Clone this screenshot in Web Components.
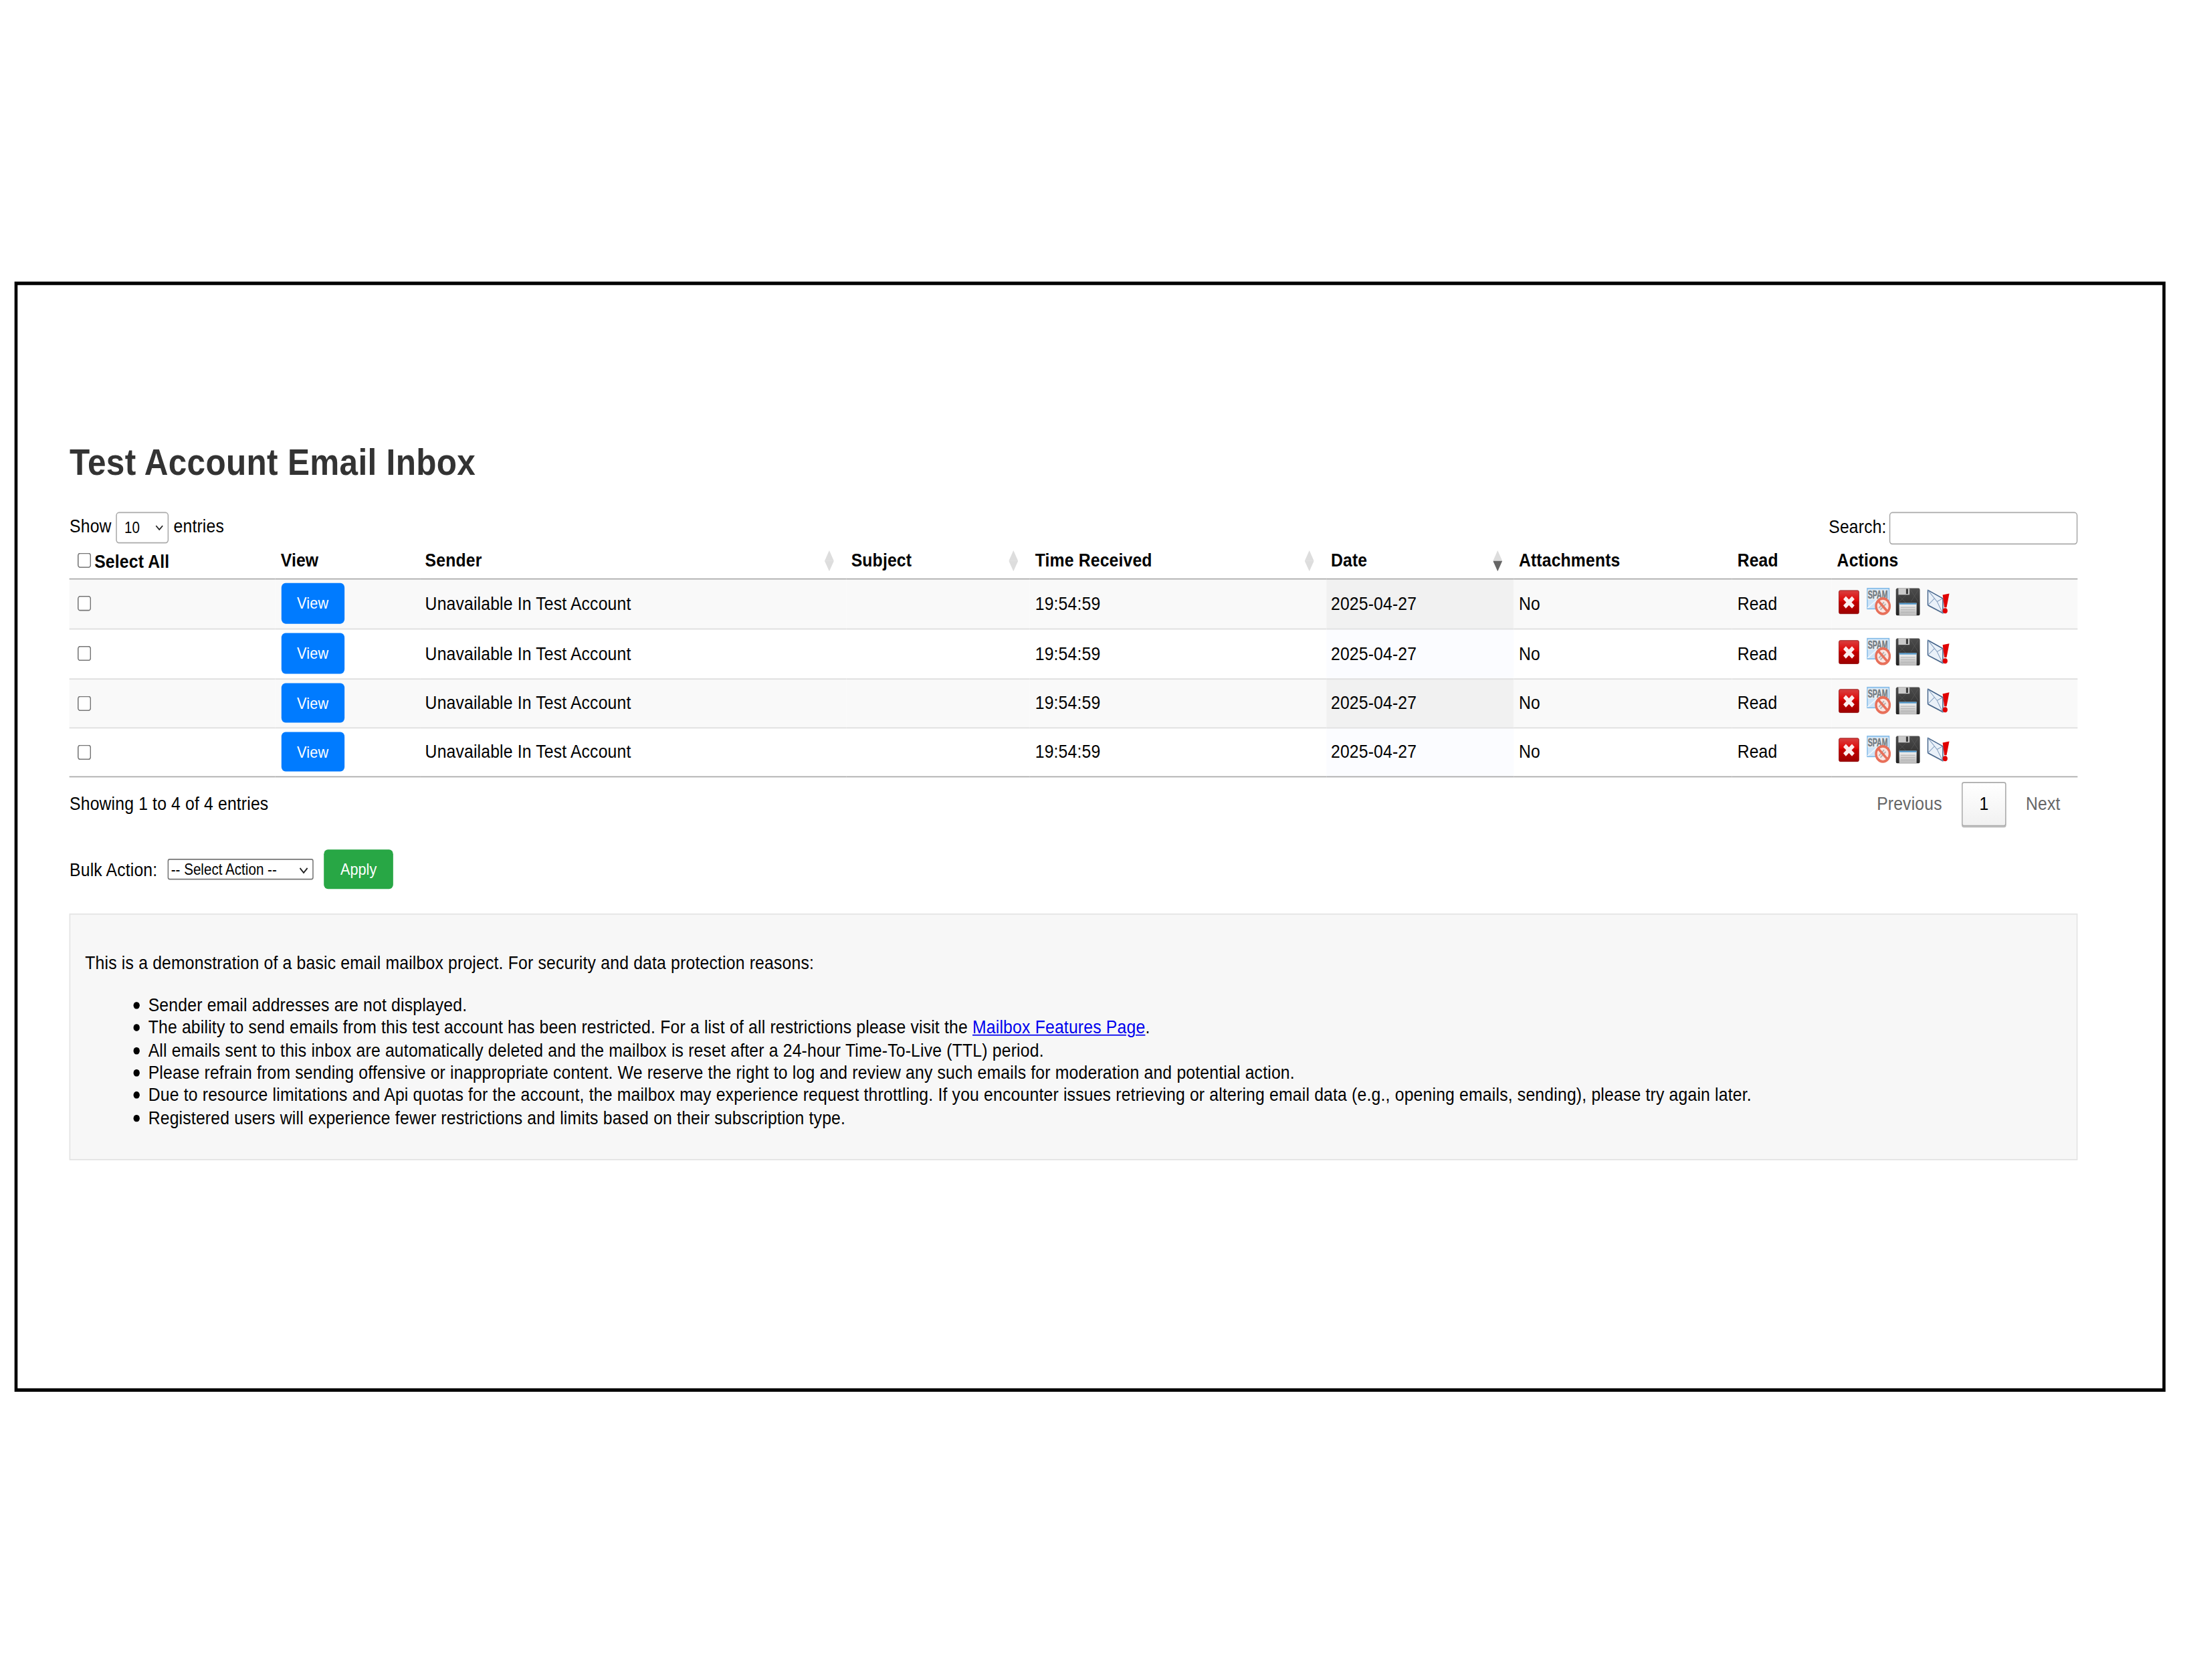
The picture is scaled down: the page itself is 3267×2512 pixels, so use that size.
<!doctype html>
<html>
<head>
<meta charset="utf-8">
<title>Test Account Email Inbox</title>
<style>
  html { overflow: hidden; background: #fff; }
  body { margin: 0; padding: 0; width: 3267px; height: 2512px; }
  a { color: #0000ee; }
  p { margin: 0 0 16px; }
  ul { margin: 0; padding: 0 0 0 61px; list-style: none; }
  li { position: relative; }
  li::before {
    content: '';
    position: absolute;
    left: -13.9px;
    top: 7px;
    width: 5.2px;
    height: 6px;
    border-radius: 50%;
    background: #000;
  }
</style>
</head>
<body>
<page-stage>
  <page-frame>
    <inbox-title>Test Account Email Inbox</inbox-title>
    <inbox-controls></inbox-controls>
    <inbox-table></inbox-table>
    <inbox-footer></inbox-footer>
    <bulk-action></bulk-action>
    <notice-box>
      <p>This is a demonstration of a basic email mailbox project. For security and data protection reasons:</p>
      <ul>
        <li>Sender email addresses are not displayed.</li>
        <li>The ability to send emails from this test account has been restricted. For a list of all restrictions please visit the <a href="#">Mailbox Features Page</a>.</li>
        <li>All emails sent to this inbox are automatically deleted and the mailbox is reset after a 24-hour Time-To-Live (TTL) period.</li>
        <li>Please refrain from sending offensive or inappropriate content. We reserve the right to log and review any such emails for moderation and potential action.</li>
        <li>Due to resource limitations and Api quotas for the account, the mailbox may experience request throttling. If you encounter issues retrieving or altering email data (e.g., opening emails, sending), please try again later.</li>
        <li>Registered users will experience fewer restrictions and limits based on their subscription type.</li>
      </ul>
    </notice-box>
  </page-frame>
</page-stage>

<script>
const chevron = (w, h) => `url("data:image/svg+xml,%3Csvg xmlns='http://www.w3.org/2000/svg' viewBox='0 0 10 6' width='${w}' height='${h}' preserveAspectRatio='none'%3E%3Cpath d='M1 1L5 5L9 1' fill='none' stroke='%23222' stroke-width='1.3'/%3E%3C/svg%3E")`

// the reference is a small page stretched to the window, so the whole stage is scaled
class PageStage extends HTMLElement {
  constructor() {
    super()
    this.attachShadow({ mode: 'open' }).innerHTML = `
      <style>
        :host {
          display: block;
          box-sizing: border-box;
          width: 2111.8px;
          height: 1443.7px;
          padding: 242px 0 0 13.6px;
          transform: scale(1.547, 1.74);
          transform-origin: 0 0;
          font: 16px/19.4px "Liberation Sans", Arial, sans-serif;
          letter-spacing: .1px;
          color: #000;
        }
      </style>
      <slot></slot>`
  }
}

class PageFrame extends HTMLElement {
  constructor() {
    super()
    this.attachShadow({ mode: 'open' }).innerHTML = `
      <style>
        :host {
          display: block;
          box-sizing: border-box;
          width: 2079.3px;
          height: 954px;
          border: 3px solid #000;
          padding: 133px 81.6px 0 50.7px;
        }
      </style>
      <slot></slot>`
  }
}

class InboxTitle extends HTMLElement {
  constructor() {
    super()
    this.attachShadow({ mode: 'open' }).innerHTML = `
      <style>
        :host {
          display: block;
          font-size: 32px;
          font-weight: 700;
          line-height: 38px;
          letter-spacing: .2px;
          color: #333;
          margin-bottom: 23.6px;
        }
      </style>
      <slot></slot>`
  }
}

class InboxControls extends HTMLElement {
  constructor() {
    super()
    this.attachShadow({ mode: 'open' }).innerHTML = `
      <style>
        :host {
          display: flex;
          justify-content: space-between;
          align-items: center;
          height: 28px;
        }
        select {
          appearance: none;
          width: 51px;
          height: 26.5px;
          padding: 0 0 0 7px;
          border: 1px solid #aaa;
          border-radius: 3px;
          background: #fff ${chevron(8, 5)} no-repeat right 3.8px center;
          font: 13.33px "Liberation Sans", Arial, sans-serif;
          color: #000;
        }
        input {
          box-sizing: border-box;
          width: 182px;
          height: 28px;
          margin-left: 3px;
          border: 1px solid #aaa;
          border-radius: 3px;
          background: #fff;
        }
        .search { display: flex; align-items: center; }
        .search span { padding-bottom: 1px; }
      </style>
      <div>Show <select><option>10</option></select> entries</div>
      <div class="search"><span>Search:</span><input type="search"></div>`
  }
}

const sortIcon = (active) => `
  <svg class="sort" viewBox="0 0 9 18" width="9" height="18">
    <path d="M4.5 0L9 9H0Z" fill="#ddd"/>
    <path d="M0 9H9L4.5 18Z" fill="${active ? '#666' : '#ddd'}"/>
  </svg>`

const rowTemplate = `
  <tr>
    <td><input type="checkbox"></td>
    <td><view-button>View</view-button></td>
    <td>Unavailable In Test Account</td>
    <td></td>
    <td>19:54:59</td>
    <td class="sorted">2025-04-27</td>
    <td>No</td>
    <td>Read</td>
    <td><action-icons></action-icons></td>
  </tr>`

class InboxTable extends HTMLElement {
  constructor() {
    super()
    this.attachShadow({ mode: 'open' }).innerHTML = `
      <style>
        :host { display: block; }
        table {
          width: 100%;
          table-layout: fixed;
          border-collapse: separate;
          border-spacing: 0;
        }
        th {
          position: relative;
          height: 30px;
          padding: 0 5px;
          box-sizing: border-box;
          text-align: left;
          font-weight: 700;
          border-bottom: 1px solid #aaa;
        }
        td {
          height: 42.5px;
          padding: 0 5px 1.1px;
          box-sizing: border-box;
          border-top: 1px solid #ddd;
        }
        th:nth-child(6), th:nth-child(7), td:nth-child(6), td:nth-child(7) { padding-left: 4.5px; }
        tr:first-child td { border-top: 0; }
        tr:last-child td { border-bottom: 1px solid #aaa; }
        tbody tr:nth-child(odd) td { background: #f9f9f9; }
        tbody tr:nth-child(odd) td.sorted { background: #f1f1f1; }
        tbody tr:nth-child(even) td.sorted { background: #fbfcff; }
        input { width: 13px; height: 13px; margin: 0 0 0 2.4px; vertical-align: middle; position: relative; top: -.6px; }
        th input { margin: 0 3.6px 0 2.4px; top: -1.4px; }
        th .all { position: relative; top: .6px; }
        .sort { position: absolute; right: 11.6px; top: 5.5px; }
        view-button { margin-left: .3px; }
        action-icons { position: relative; top: -1.4px; }
      </style>
      <table>
        <colgroup>
          <col style="width:199px"><col style="width:139.6px"><col style="width:411.8px">
          <col style="width:177.8px"><col style="width:286.4px"><col style="width:181.6px">
          <col style="width:210.7px"><col style="width:96.3px"><col>
        </colgroup>
        <thead>
          <tr>
            <th><input type="checkbox"><span class="all">Select All</span></th>
            <th>View</th>
            <th>Sender${sortIcon()}</th>
            <th>Subject${sortIcon()}</th>
            <th>Time Received${sortIcon()}</th>
            <th>Date${sortIcon(true)}</th>
            <th>Attachments</th>
            <th>Read</th>
            <th>Actions</th>
          </tr>
        </thead>
        <tbody>${rowTemplate.repeat(4)}</tbody>
      </table>`
  }
}

class ViewButton extends HTMLElement {
  constructor() {
    super()
    this.attachShadow({ mode: 'open' }).innerHTML = `
      <style>
        :host {
          display: inline-block;
          box-sizing: border-box;
          width: 61.4px;
          height: 34.5px;
          border-radius: 4px;
          background: #007bff;
          color: #fff;
          font-size: 14px;
          line-height: 34.5px;
          text-align: center;
          vertical-align: middle;
        }
      </style>
      <slot></slot>`
  }
}

// four 24x24 icons, one space apart like inline images
class ActionIcons extends HTMLElement {
  constructor() {
    super()
    this.attachShadow({ mode: 'open' }).innerHTML = `
      <style>
        :host { display: flex; gap: 4.45px; align-items: center; }
        svg { display: block; flex: none; }
      </style>
      <svg viewBox="0 0 24 24" width="24" height="24">
        <defs>
          <linearGradient id="red" x1="0" y1="0" x2="0" y2="1">
            <stop offset="0" stop-color="#d84040"/><stop offset=".42" stop-color="#e00a0a"/><stop offset=".5" stop-color="#c40000"/><stop offset="1" stop-color="#9c0000"/>
          </linearGradient>
        </defs>
        <rect x="2.4" y="2.4" width="19.2" height="20" rx="1.2" fill="url(#red)" stroke="#8f0a0a" stroke-width=".5"/>
        <path d="M7.8 8.6L16.2 16.6M16.2 8.6L7.8 16.6" stroke="#fbeeee" stroke-width="3.6"/>
      </svg>
      <svg viewBox="0 0 24 24" width="24" height="24">
        <rect x=".8" y=".6" width="21" height="17.6" fill="#cfe5f8" stroke="#7fb8e6" stroke-width=".9"/>
        <path d="M1 17.5L12 9M21.5 17L14 11" stroke="#f2f8fd" stroke-width=".9" fill="none"/>
        <rect x="1.2" y="2.2" width="20.2" height="8" fill="#edf0f2"/>
        <text transform="translate(1.2 9.4) scale(1 1.37)" font-family="Liberation Sans, sans-serif" font-size="6.9" font-weight="700" letter-spacing="0" fill="#737c83" stroke="#737c83" stroke-width=".2">SPAM</text>
        <circle cx="15.8" cy="15.9" r="6.6" fill="#fbe6e2" stroke="#e8705a" stroke-width="2.2"/>
        <path d="M12 17.5L17 12.4M13.4 19L18.6 14" stroke="#b4b4b4" stroke-width="1.2"/>
        <path d="M11.2 11.2L20.4 20.6" stroke="#e8705a" stroke-width="2.2"/>
      </svg>
      <svg viewBox="0 0 24 24" width="24" height="24">
        <defs>
          <linearGradient id="disk" x1="0" y1="0" x2="0" y2="1">
            <stop offset="0" stop-color="#4c4c4c"/><stop offset="1" stop-color="#242424"/>
          </linearGradient>
          <linearGradient id="label" x1="0" y1="0" x2="0" y2="1">
            <stop offset="0" stop-color="#f4f4f4"/><stop offset="1" stop-color="#b8b8b8"/>
          </linearGradient>
        </defs>
        <path d="M1.4 .5H22.2A1.4 1.4 0 0 1 23.6 1.9V22.6A1.4 1.4 0 0 1 22.2 24H1.8A1.4 1.4 0 0 1 .4 22.6V1.5Z" fill="url(#disk)"/>
        <path d="M3 6.5L10 13M10 6.5L3 13M14 1L22 12M22 2L15 12" stroke="#5a5a5a" stroke-width=".4" fill="none"/>
        <rect x="2.8" y=".5" width="10.8" height="5.6" fill="#c9c9c9"/>
        <rect x="10.2" y="1" width="2" height="4.4" fill="#3b3b3b"/>
        <rect x="3.6" y="13.2" width="16.8" height="10.8" fill="url(#label)"/>
        <rect x="3.6" y="13.2" width="16.8" height="1.2" fill="#4a93c8"/>
        <path d="M5 17H19M5 19H19M5 21H19" stroke="#a8a8a8" stroke-width=".5"/>
      </svg>
      <svg viewBox="0 0 24 24" width="24" height="24">
        <path d="M3 3.4L17.4 10.6V23L3 16.2Z" fill="#9aa3ad" opacity=".45"/>
        <path d="M2.3 2.1L16.8 9.3V21.8L2.3 15Z" fill="#eaf1f9" stroke="#3f5f86" stroke-width=".9" stroke-linejoin="round"/>
        <path d="M2.3 2.1L11.2 12L16.6 9.3M2.3 15L8.5 9.4M16.6 21.8L11.2 12" fill="none" stroke="#7f9bbc" stroke-width=".6"/>
        <path d="M16.6 6.2L23 5L20.4 17H18.2Z" fill="#e00000"/>
        <circle cx="19" cy="19.9" r="2.3" fill="#e00000"/>
      </svg>`
  }
}

class InboxFooter extends HTMLElement {
  constructor() {
    super()
    this.attachShadow({ mode: 'open' }).innerHTML = `
      <style>
        :host {
          display: flex;
          justify-content: space-between;
          align-items: center;
          margin-top: 4.6px;
        }
        .pages { display: flex; gap: 2px; }
        span {
          box-sizing: border-box;
          padding: 0 16px;
          height: 37.4px;
          line-height: 35.4px;
          border: 1px solid transparent;
          border-radius: 2px;
          color: #666;
        }
        .current {
          color: #000;
          border-color: #aaa;
          background: linear-gradient(#fff, #f1f1f1);
          box-shadow: 0 1px 0 #b5b5b5;
        }
      </style>
      <div>Showing 1 to 4 of 4 entries</div>
      <div class="pages">
        <span>Previous</span><span class="current">1</span><span>Next</span>
      </div>`
  }
}

class BulkAction extends HTMLElement {
  constructor() {
    super()
    this.attachShadow({ mode: 'open' }).innerHTML = `
      <style>
        :host {
          display: flex;
          align-items: center;
          margin-top: 20.7px;
        }
        select {
          appearance: none;
          box-sizing: border-box;
          width: 141px;
          height: 18px;
          margin: 0 9.8px 0 10.2px;
          padding: 0 0 0 2px;
          border: 1px solid #767676;
          border-radius: 2px;
          background: #fff ${chevron(9, 5.5)} no-repeat right 4.5px center;
          font: 13.33px "Liberation Sans", Arial, sans-serif;
          color: #000;
        }
        button {
          box-sizing: border-box;
          width: 67px;
          height: 34px;
          padding: 0;
          border: 0;
          border-radius: 4px;
          background: #28a745;
          color: #fff;
          font: 14px "Liberation Sans", Arial, sans-serif;
        }
      </style>
      <span>Bulk Action:</span>
      <select><option>-- Select Action --</option></select>
      <button>Apply</button>`
  }
}

class NoticeBox extends HTMLElement {
  constructor() {
    super()
    this.attachShadow({ mode: 'open' }).innerHTML = `
      <style>
        :host {
          display: block;
          box-sizing: border-box;
          height: 212.2px;
          margin-top: 21px;
          padding: 32.2px 15px 10px 14px;
          border: 1px solid #e3e3e3;
          background: #f7f7f7;
          letter-spacing: .118px;
        }
      </style>
      <slot></slot>`
  }
}

customElements.define('page-stage', PageStage)
customElements.define('page-frame', PageFrame)
customElements.define('inbox-title', InboxTitle)
customElements.define('inbox-controls', InboxControls)
customElements.define('inbox-table', InboxTable)
customElements.define('view-button', ViewButton)
customElements.define('action-icons', ActionIcons)
customElements.define('inbox-footer', InboxFooter)
customElements.define('bulk-action', BulkAction)
customElements.define('notice-box', NoticeBox)
</script>
</body>
</html>
